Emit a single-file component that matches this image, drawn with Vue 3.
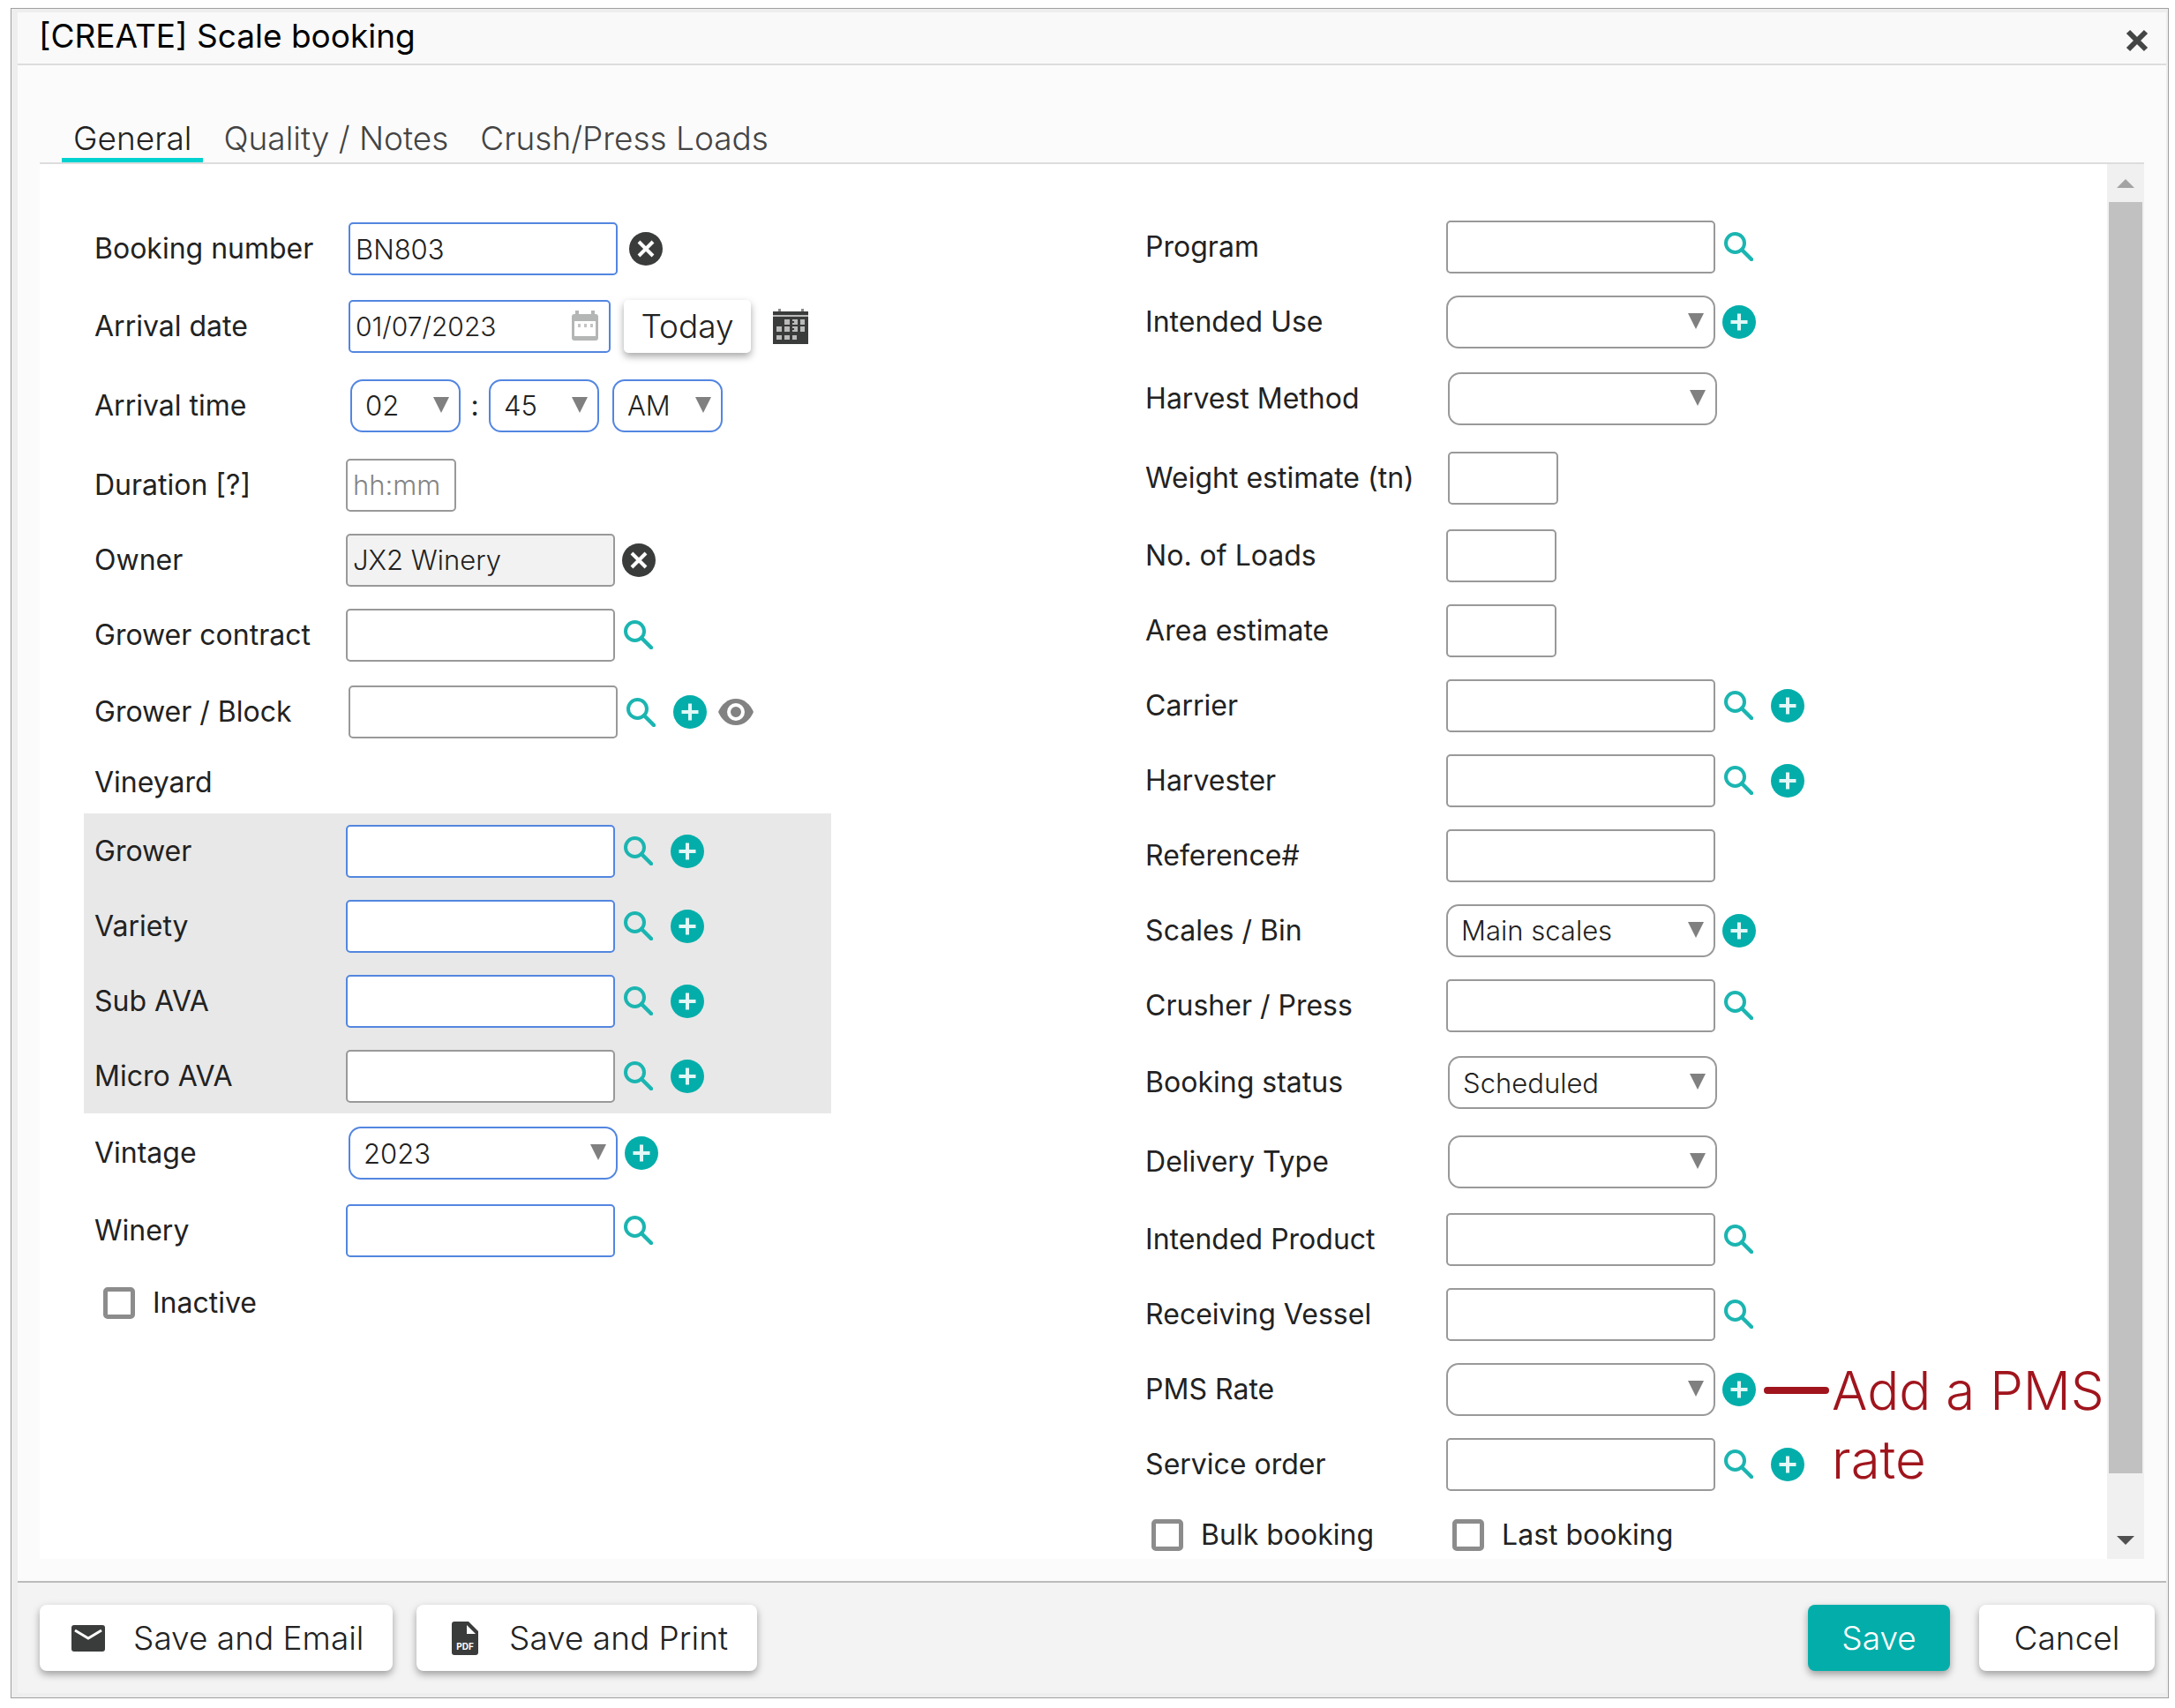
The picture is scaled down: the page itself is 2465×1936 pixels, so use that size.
<script setup>
import { h, ref } from 'vue'

const tabs = ['General', 'Quality / Notes', 'Crush/Press Loads']
const activeTab = ref('General')

const leftTop = [
  { id: 'booking-number', label: 'Booking number', type: 'text', value: 'BN803', required: true, size: 'tall', icons: ['clear'], apart: true },
  { id: 'arrival-date', label: 'Arrival date', type: 'date', value: '01/07/2023', required: true, size: 'shifted' },
  { id: 'arrival-time', label: 'Arrival time', type: 'time', size: 'taller' },
  { id: 'duration', label: 'Duration [?]', type: 'text', placeholder: 'hh:mm', short: true },
  { id: 'owner', label: 'Owner', type: 'text', value: 'JX2 Winery', readonly: true, icons: ['clear'] },
  { id: 'grower-contract', label: 'Grower contract', type: 'text', icons: ['search'] },
  { id: 'grower-block', label: 'Grower / Block', type: 'text', size: 'tall', icons: ['search', 'add', 'view'] },
  { id: 'vineyard', label: 'Vineyard', type: 'none', size: 'low' }
]
const leftShaded = [
  { id: 'grower', label: 'Grower', type: 'text', required: true, icons: ['search', 'add'] },
  { id: 'variety', label: 'Variety', type: 'text', required: true, icons: ['search', 'add'] },
  { id: 'sub-ava', label: 'Sub AVA', type: 'text', required: true, icons: ['search', 'add'] },
  { id: 'micro-ava', label: 'Micro AVA', type: 'text', icons: ['search', 'add'] }
]
const leftBottom = [
  { id: 'vintage', label: 'Vintage', type: 'select', value: '2023', required: true, size: 'tall', icons: ['add'] },
  { id: 'winery', label: 'Winery', type: 'text', required: true, icons: ['search'] }
]
const leftGroups = [
  { name: 'top', rows: leftTop },
  { name: 'shaded', rows: leftShaded },
  { name: 'bottom', rows: leftBottom }
]
const rightGroups = [
  {
    name: 'details',
    rows: [
      { id: 'program', label: 'Program', type: 'text', icons: ['search'] },
      { id: 'intended-use', label: 'Intended Use', type: 'select', value: '', icons: ['add'] },
      { id: 'harvest-method', label: 'Harvest Method', type: 'select', value: '', size: 'tall' },
      { id: 'weight', label: 'Weight estimate (tn)', type: 'text', short: true, size: 'tall' },
      { id: 'loads', label: 'No. of Loads', type: 'text', short: true },
      { id: 'area', label: 'Area estimate', type: 'text', short: true },
      { id: 'carrier', label: 'Carrier', type: 'text', icons: ['search', 'add'] },
      { id: 'harvester', label: 'Harvester', type: 'text', icons: ['search', 'add'] },
      { id: 'reference', label: 'Reference#', type: 'text' },
      { id: 'scales', label: 'Scales / Bin', type: 'select', value: 'Main scales', icons: ['add'] },
      { id: 'crusher', label: 'Crusher / Press', type: 'text', icons: ['search'] },
      { id: 'status', label: 'Booking status', type: 'select', value: 'Scheduled', size: 'tall' },
      { id: 'delivery-type', label: 'Delivery Type', type: 'select', value: '', size: 'tall' },
      { id: 'intended-product', label: 'Intended Product', type: 'text', icons: ['search'] },
      { id: 'vessel', label: 'Receiving Vessel', type: 'text', icons: ['search'] },
      { id: 'pms-rate', label: 'PMS Rate', type: 'select', value: '', icons: ['add'], note: true },
      { id: 'service-order', label: 'Service order', type: 'text', icons: ['search', 'add'] }
    ]
  }
]
const columns = [
  { side: 'left', groups: leftGroups, checks: [{ id: 'inactive', label: 'Inactive' }] },
  { side: 'right', groups: rightGroups, checks: [{ id: 'bulk', label: 'Bulk booking' }, { id: 'last', label: 'Last booking' }] }
]
const timeParts = [
  { name: 'Hour', value: '02' },
  { name: 'Minute', value: '45' },
  { name: 'AM or PM', value: 'AM' }
]

const iconNames = { clear: 'Clear', search: 'Search', add: 'Add', view: 'View' }

const Icon = ({ name }) => {
  const svg = (w, hgt, kids) =>
    h('svg', { width: w, height: hgt, viewBox: `0 0 ${w} ${hgt}`, fill: 'none', 'aria-hidden': 'true' }, kids)
  if (name === 'search') {
    return svg(33, 33, [
      h('circle', { cx: 12.5, cy: 12.5, r: 10.5, stroke: '#1bb5b1', 'stroke-width': 4 }),
      h('path', { d: 'M20 20l11 11', stroke: '#1bb5b1', 'stroke-width': 4.5, 'stroke-linecap': 'round' })
    ])
  }
  if (name === 'add') {
    return svg(38, 38, [
      h('circle', { cx: 19, cy: 19, r: 19, fill: '#03aeaa' }),
      h('path', { d: 'M19 9.500v19M9.500 19h19', stroke: '#e0f8f7', 'stroke-width': 4 })
    ])
  }
  if (name === 'clear') {
    return svg(38, 38, [
      h('circle', { cx: 19, cy: 19, r: 19, fill: '#3a3c3b' }),
      h('path', { d: 'M11 11l16 16M27 11L11 27', stroke: '#fff', 'stroke-width': 4 })
    ])
  }
  return svg(40, 30, [
    h('path', { d: 'M0 15C4 6 11 0 20 0s16 6 20 15c-4 9-11 15-20 15S4 24 0 15z', fill: '#828282' }),
    h('circle', { cx: 20, cy: 15, r: 8, stroke: '#fff', 'stroke-width': 4 }),
    h('path', { d: 'M20 10a5 5 0 1 1-5 5c3 1 5-2 5-5z', fill: '#828282' })
  ])
}
</script>

<template>
  <section class="dialog" role="dialog" aria-labelledby="dialog-title">
    <header class="titlebar">
      <h1 id="dialog-title">[CREATE] Scale booking</h1>
      <button class="close" type="button" aria-label="Close">
        <svg width="26" height="26" viewBox="0 0 26 26"><path d="M3 3l20 20M23 3L3 23" stroke="#444645" stroke-width="6" /></svg>
      </button>
    </header>

    <div class="body">
      <nav class="tabs" role="tablist">
        <button
          v-for="tab in tabs"
          :key="tab"
          type="button"
          role="tab"
          :aria-selected="tab === activeTab"
          :class="['tab', { active: tab === activeTab }]"
          @click="activeTab = tab"
        >{{ tab }}</button>
      </nav>

      <div class="panel">
        <form class="form" @submit.prevent>
          <div v-for="col in columns" :key="col.side" :class="['column', col.side]">
            <div v-for="group in col.groups" :key="group.name" :class="['group', group.name]">
              <div v-for="row in group.rows" :key="row.id" :class="['row', row.size]">
                <span v-if="row.type === 'none'" class="label">{{ row.label }}</span>
                <label v-else class="label" :for="row.id">{{ row.label }}</label>

                <div class="controls">
                  <input
                    v-if="row.type === 'text'"
                    :id="row.id"
                    type="text"
                    :class="['field', { required: row.required, short: row.short }]"
                    :value="row.value"
                    :placeholder="row.placeholder"
                    :readonly="row.readonly"
                  />

                  <span v-if="row.type === 'select'" class="picker">
                    <select :id="row.id" :class="['field', { required: row.required }]">
                      <option>{{ row.value }}</option>
                    </select>
                  </span>

                  <template v-if="row.type === 'date'">
                    <span class="date">
                      <input :id="row.id" type="text" class="field required" :value="row.value" />
                      <svg class="date-icon" width="32" height="34" viewBox="0 0 32 34" aria-hidden="true">
                        <path d="M5 0h4v4h14V0h4v4h1a3 3 0 0 1 3 3v24a3 3 0 0 1-3 3H4a3 3 0 0 1-3-3V7a3 3 0 0 1 3-3h1z" fill="#b4b6b5" />
                        <path d="M4 12h24v17H4z" fill="#fff" />
                        <path d="M8 17h3M15 17h3M22 17h3" stroke="#c4c4c4" stroke-width="4" />
                      </svg>
                    </span>
                    <button type="button" class="button today">Today</button>
                    <button type="button" class="icon calendar" aria-label="Open calendar">
                      <svg width="40" height="40" viewBox="0 0 40 40" aria-hidden="true">
                        <path d="M6 0h3v3H6zM32 0h3v3h-3z" fill="#8a8a8a" />
                        <path d="M0 3h40v37H0z" fill="#3a3c3b" />
                        <path d="M0 8h40" stroke="#bbb" stroke-width="2" />
                        <path d="M4 20h6v6H4zM13 12h6v6h-6zM22 12h6v6h-6zM31 12h5v6h-5zM13 20h6v6h-6zM22 20h6v6h-6zM31 20h5v6h-5zM4 30h6v5H4zM13 30h6v5h-6zM22 30h5v5h-5z" fill="#b9bab9" />
                        <path d="M20 15h4M20 23h4M15 19h3M24 19h3M33 19h3" stroke="#3a3c3b" stroke-width="2" />
                      </svg>
                    </button>
                  </template>

                  <template v-if="row.type === 'time'">
                    <template v-for="(part, i) in timeParts" :key="part.name">
                      <span v-if="i === 1" class="colon">:</span>
                      <span class="picker short">
                        <select :id="i === 0 ? row.id : null" class="field required short" :aria-label="part.name">
                          <option>{{ part.value }}</option>
                        </select>
                      </span>
                    </template>
                  </template>

                  <button
                    v-for="icon in row.icons"
                    :key="icon"
                    type="button"
                    :class="['icon', icon, { apart: row.apart }]"
                    :aria-label="iconNames[icon] + ' ' + row.label"
                  ><Icon :name="icon" /></button>

                  <p v-if="row.note" class="note">Add a PMS<br />rate</p>
                </div>
              </div>
            </div>

            <div class="checks">
              <label v-for="check in col.checks" :key="check.id" class="check">
                <input :id="check.id" type="checkbox" />
                <span>{{ check.label }}</span>
              </label>
            </div>
          </div>
        </form>

        <div class="scrollbar" aria-hidden="true">
          <span class="arrow up"></span>
          <span class="track"><span class="thumb"></span></span>
          <span class="arrow down"></span>
        </div>
      </div>
    </div>

    <footer class="footer">
      <button type="button" class="button email">
        <svg width="38" height="30" viewBox="0 0 38 30" aria-hidden="true">
          <rect width="38" height="30" rx="3" fill="#3a3c3b" />
          <path d="M4 6l15 9 15-9" fill="none" stroke="#fff" stroke-width="3" />
        </svg>
        Save and Email
      </button>
      <button type="button" class="button print">
        <svg width="30" height="38" viewBox="0 0 30 38" aria-hidden="true">
          <path d="M3 0h16l11 11v24a3 3 0 0 1-3 3H3a3 3 0 0 1-3-3V3a3 3 0 0 1 3-3z" fill="#3a3c3b" />
          <path d="M17 4v10h10z" fill="#fff" />
          <text x="15" y="32" text-anchor="middle" font-family="Inter, sans-serif" font-weight="700" font-size="10" fill="#fff">PDF</text>
        </svg>
        Save and Print
      </button>
      <span class="spacer"></span>
      <button type="button" class="button save">Save</button>
      <button type="button" class="button cancel">Cancel</button>
    </footer>
  </section>
</template>

<style>
body {
  background: #fff;
}
</style>

<style scoped>
.dialog,
.dialog * {
  box-sizing: border-box;
}

.dialog {
  margin: 9px 7px 12px 12px;
  padding: 4px 2px 5px 7px;
  border: 1px solid #a0a0a0;
  background: #eee;
  color: #222;
  font-family: Inter, "Open Sans", sans-serif;
  font-size: 32px;
}

button,
input,
select {
  font-family: inherit;
  color: inherit;
  margin: 0;
}

button {
  border: 0;
  padding: 0;
  background: none;
  cursor: pointer;
}

.titlebar {
  display: flex;
  justify-content: space-between;
  align-items: center;
  height: 60px;
  padding: 0 20px 0 24px;
  border-bottom: 2px solid #ddd;
  background: #f9f9f9;
}

h1 {
  margin: 0;
  padding-bottom: 4px;
  color: #000;
  font-size: 37px;
  font-weight: 400;
  line-height: 44px;
}

.close {
  display: flex;
  padding-top: 6px;
}

.body {
  padding: 66px 25px 25px;
  background: #fbfbfb;
}

.tabs {
  display: flex;
  gap: 10px;
  height: 46px;
  padding-left: 25px;
  border-bottom: 2px solid #ddd;
}

.tab {
  height: 44px;
  padding: 0 13px 6px;
  border-bottom: 5px solid transparent;
  color: #444;
  font-size: 37px;
  font-weight: 300;
  line-height: 33px;
  white-space: nowrap;
}

.tab.active {
  border-bottom-color: #00d2cf;
  color: #222;
}

.panel {
  display: flex;
  background: #fff;
}

.form {
  flex: 1;
  display: grid;
  grid-template-columns: 11fr 10fr;
  padding: 51px 0 0 50px;
}

.column.right {
  padding-left: 2px;
}

.group {
  padding-left: 12px;
}

.right .group {
  padding-left: 0;
}

.shaded {
  margin-right: 29.5%;
  background: #e8e8e8;
}

.row {
  display: flex;
  align-items: center;
  height: 85px;
}

.row.tall {
  height: 90px;
}

.row.taller {
  height: 95px;
}

.row.low {
  height: 70px;
}

.label {
  flex: none;
  width: 285px;
  white-space: nowrap;
}

.right .label {
  width: 341px;
}

.label,
.check {
  font-size: 32px;
  line-height: 40px;
}

.controls {
  position: relative;
  display: flex;
  align-items: center;
}

.tall .controls,
.shifted .controls {
  padding-left: 3px;
}

.right .tall .controls {
  padding-left: 2px;
}

.taller .controls {
  padding-left: 5px;
}

.field {
  display: block;
  width: 305px;
  height: 60px;
  padding: 0 6px;
  border: 2px solid #999;
  border-radius: 5px;
  background: #fff;
  outline: none;
  font-size: 31px;
  font-weight: 300;
}

.field.short {
  width: 125px;
}

.field.required {
  border-color: #5386e0;
}

.field:read-only:not(select) {
  background: #f2f2f2;
}

.field::placeholder {
  color: #858585;
  opacity: 1;
}

select.field {
  padding: 0 40px 0 15px;
  border-radius: 14px;
  appearance: none;
}

select.field.short {
  padding-right: 30px;
}

.picker {
  position: relative;
}

.picker::after {
  content: "";
  position: absolute;
  top: 20px;
  right: 13px;
  border: 9px solid transparent;
  border-top: 18px solid #808080;
  border-bottom: 0;
  pointer-events: none;
}

.picker.short + .picker.short {
  margin-left: 15px;
}

.colon {
  width: 32px;
  text-align: center;
}

.date {
  position: relative;
}

.date .field {
  width: 297px;
  font-size: 30px;
}

.date-icon {
  position: absolute;
  top: 12px;
  right: 13px;
}

.icon {
  display: flex;
  margin-left: 8px;
}

.icon.search {
  margin-left: 10px;
}

.icon.search + .add {
  margin-left: 20px;
}

.icon.view,
.icon.apart {
  margin-left: 13px;
}

.icon.calendar {
  margin-left: 25px;
}

.button {
  display: flex;
  align-items: center;
  height: 75px;
  border-radius: 8px;
  background: #fff;
  box-shadow: 0 4px 8px rgba(0, 0, 0, 0.35);
  font-size: 37px;
  font-weight: 300;
  white-space: nowrap;
}

.button.today {
  justify-content: center;
  width: 144px;
  height: 60px;
  margin-left: 15px;
  border-radius: 5px;
}

.note {
  position: absolute;
  top: -8px;
  left: 360px;
  margin: 0;
  padding-left: 77px;
  color: #a0151d;
  font-size: 60px;
  font-weight: 300;
  line-height: 78px;
  white-space: nowrap;
}

.note::before {
  content: "";
  position: absolute;
  top: 35px;
  left: 0;
  width: 74px;
  height: 8px;
  border-radius: 4px;
  background: #a0151d;
}

.checks {
  display: flex;
  height: 80px;
  padding-left: 22px;
}

.right .checks {
  height: 65px;
  padding: 10px 0 0 7px;
}

.check {
  display: flex;
  align-items: center;
  gap: 20px;
}

.right .check {
  width: 341px;
}

.check input {
  width: 36px;
  height: 36px;
  border: 5px solid #8c8c8c;
  border-radius: 5px;
  background: #fff;
  appearance: none;
}

.scrollbar {
  display: flex;
  flex-direction: column;
  width: 42px;
  padding: 0 2px;
  background: #f0f0f0;
}

.arrow {
  display: flex;
  align-items: center;
  justify-content: center;
  height: 43px;
}

.arrow::before {
  content: "";
  border: 10px solid transparent;
}

.arrow.up::before {
  border-top: 0;
  border-bottom-color: #a3a3a3;
}

.arrow.down::before {
  border-bottom: 0;
  border-top-color: #505050;
}

.track {
  flex: 1;
}

.thumb {
  display: block;
  height: 96.4%;
  background: #c1c1c1;
}

.footer {
  display: flex;
  padding: 25px 13px 25px 25px;
  border-top: 2px solid #bbb;
  background: #f3f3f3;
}

.email {
  gap: 32px;
  width: 400px;
  padding-left: 36px;
}

.print {
  gap: 35px;
  width: 386px;
  margin-left: 27px;
  padding-left: 40px;
}

.spacer {
  flex: 1;
}

.save,
.cancel {
  justify-content: center;
}

.save {
  width: 161px;
  background: #03aeaa;
  color: #fff;
}

.cancel {
  width: 199px;
  margin-left: 33px;
}
</style>
